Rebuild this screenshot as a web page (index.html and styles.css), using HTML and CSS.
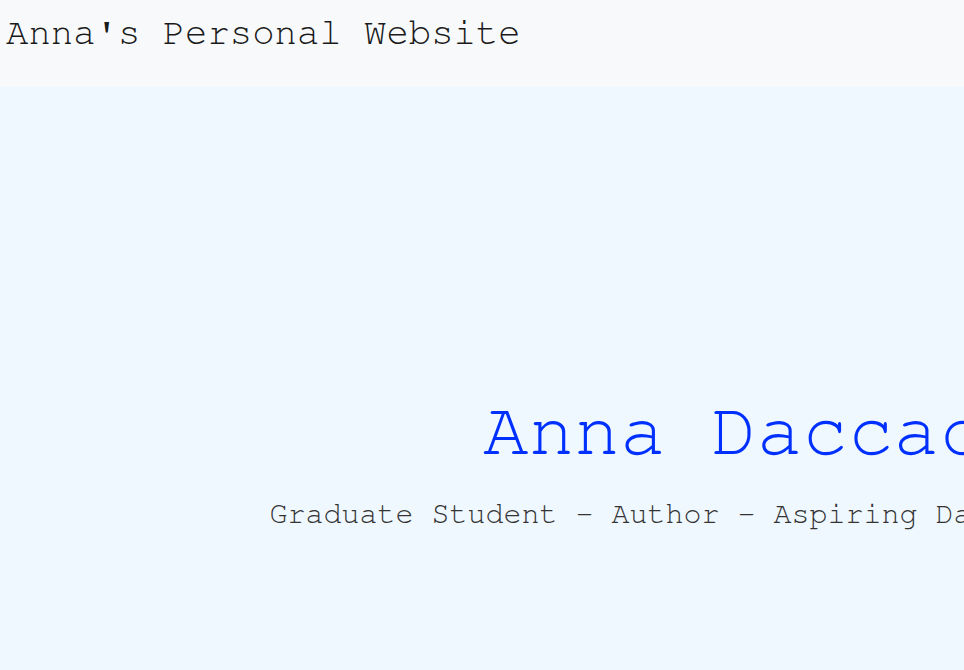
FILE: index.html
```html
<!DOCTYPE html>
<html lang="en">
<head>
<meta charset="utf-8">
<title>Anna's Personal Website</title>
<link rel="stylesheet" href="styles.css">
</head>
<body>
  <header class="site-header">
    <div class="site-title">Anna's Personal Website</div>
  </header>
  <main class="hero">
    <h1 class="hero-name">Anna Daccache</h1>
    <p class="hero-tagline">Graduate Student - Author - Aspiring Data Science Leader.</p>
  </main>
</body>
</html>
```
FILE: styles.css
```css
html, body {
  margin: 0;
  padding: 0;
  overflow: hidden;
}
body {
  font-family: "FreeMono", "Courier New", "Liberation Mono", monospace;
  background: #f0f8ff;
  color: #222;
}
.site-header {
  background: #f8f9fa;
  height: 87px;
  box-sizing: border-box;
  padding: 12px 6px 0;
}
.site-title {
  font-size: 37.3px;
  line-height: 42px;
  color: #1a1a1a;
  white-space: nowrap;
}
.hero {
  background: #f0f8ff;
  width: 1559px;
  min-height: 600px;
  box-sizing: border-box;
  padding-top: 301px;
  display: flex;
  flex-direction: column;
  align-items: center;
  text-align: center;
}
.hero-name {
  margin: 0;
  font-weight: normal;
  font-size: 76px;
  line-height: 86px;
  color: #0030ff;
  white-space: nowrap;
}
.hero-tagline {
  margin: 23px 0 0;
  padding-left: 6px;
  font-size: 30px;
  line-height: 34px;
  color: #333;
  white-space: nowrap;
}
```
